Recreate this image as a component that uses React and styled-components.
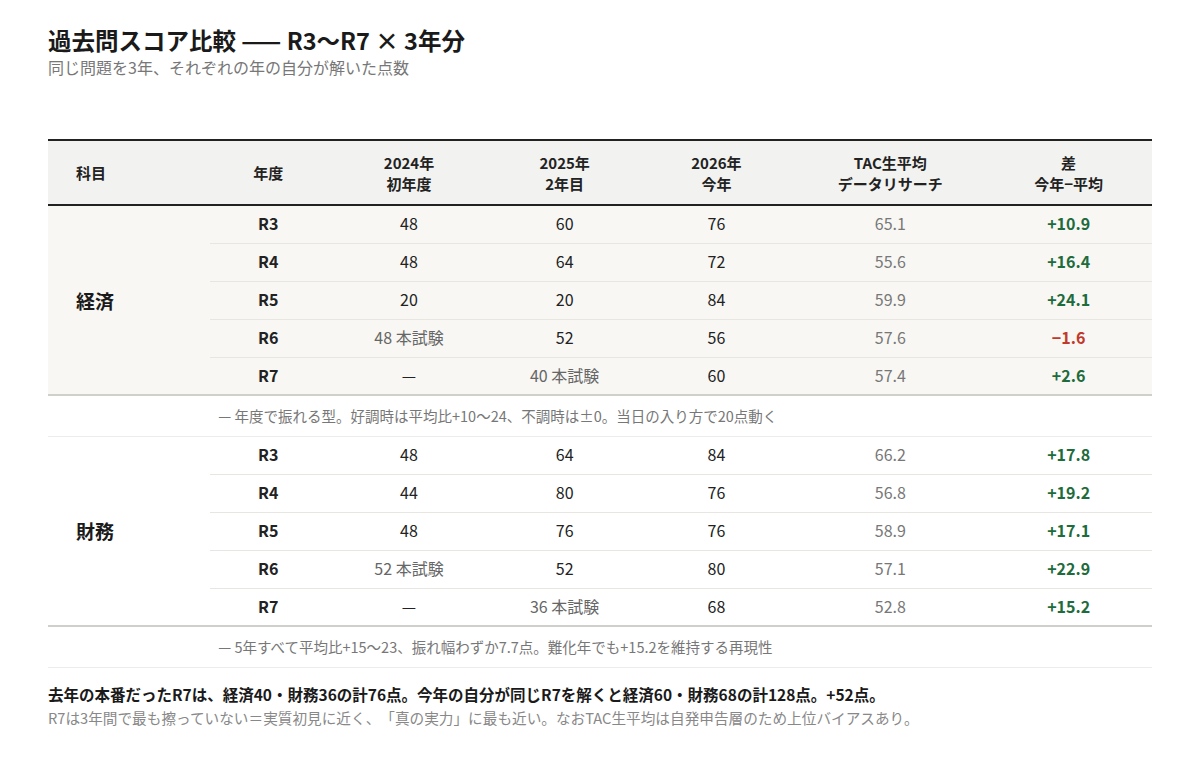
import React from "react";
import styled, { createGlobalStyle } from "styled-components";

const GlobalStyle = createGlobalStyle`
  body {
    margin: 0;
    background: #ffffff;
    font-family: "Noto Sans CJK JP", "Noto Sans", sans-serif;
    color: #1a1a1a;
    text-spacing-trim: space-all;
  }
`;

const Page = styled.div`
  padding: 25px 48px 40px;
  width: 1104px;
`;

const Title = styled.h1`
  margin: 0;
  font-size: 23.5px;
  line-height: 31px;
  font-weight: 700;
`;

const Subtitle = styled.p`
  margin: 0;
  font-size: 16px;
  line-height: 22px;
  color: #777;
`;

const Table = styled.table`
  margin-top: 61px;
  width: 100%;
  border-collapse: collapse;
  table-layout: fixed;
  border-top: 2px solid #222;
`;

const HeadRow = styled.tr`
  background: #f2f2f0;
  border-bottom: 2px solid #222;
`;

const Th = styled.th`
  height: 63px;
  padding: 0 8px;
  font-size: 15px;
  line-height: 21px;
  font-weight: 700;
  color: #222;
  text-align: ${(p) => (p.$left ? "left" : "center")};
  padding-left: ${(p) => (p.$left ? "28px" : "8px")};
`;

const Group = styled.tbody`
  background: ${(p) => (p.$tone ? "#f8f7f4" : "#ffffff")};
`;

const Row = styled.tr`
  height: 38px;
`;

const SubjectCell = styled.td`
  padding-left: 28px;
  font-size: 19px;
  font-weight: 700;
  color: #1a1a1a;
  border-bottom: 2px solid #cfcfcc;
`;

const Cell = styled.td`
  padding: 0 8px 2px;
  text-align: center;
  font-size: 16px;
  color: ${(p) => p.$color || "#222"};
  font-weight: ${(p) => (p.$bold ? 700 : 400)};
  border-bottom: ${(p) => (p.$last ? "2px solid #cfcfcc" : "1px solid #e8e6e1")};
`;

const NoteRow = styled.tr`
  height: 41px;
  background: #ffffff;
  border-bottom: 1px solid #ececea;
`;

const NoteCell = styled.td`
  padding: 0 8px;
  font-size: 14.5px;
  color: #777;
  white-space: nowrap;
`;

const Summary = styled.p`
  margin: 16px 0 0;
  font-size: 15.5px;
  line-height: 21px;
  font-weight: 700;
  color: #1a1a1a;
`;

const SummaryNote = styled.p`
  margin: 2px 0 0;
  font-size: 14.65px;
  line-height: 22px;
  color: #888;
`;

const GREEN = "#1e6b3c";
const RED = "#c0392b";

const groups = [
  {
    subject: "経済",
    tone: true,
    note: "— 年度で振れる型。好調時は平均比+10〜24、不調時は±0。当日の入り方で20点動く",
    rows: [
      ["R3", "48", "60", "76", "65.1", "+10.9"],
      ["R4", "48", "64", "72", "55.6", "+16.4"],
      ["R5", "20", "20", "84", "59.9", "+24.1"],
      ["R6", "48 本試験", "52", "56", "57.6", "−1.6"],
      ["R7", "—", "40 本試験", "60", "57.4", "+2.6"],
    ],
  },
  {
    subject: "財務",
    tone: false,
    note: "— 5年すべて平均比+15〜23、振れ幅わずか7.7点。難化年でも+15.2を維持する再現性",
    rows: [
      ["R3", "48", "64", "84", "66.2", "+17.8"],
      ["R4", "44", "80", "76", "56.8", "+19.2"],
      ["R5", "48", "76", "76", "58.9", "+17.1"],
      ["R6", "52 本試験", "52", "80", "57.1", "+22.9"],
      ["R7", "—", "36 本試験", "68", "52.8", "+15.2"],
    ],
  },
];

const widths = ["14.7%", "10.5%", "15%", "13.2%", "14.3%", "17.2%", "15.1%"];

const scoreColor = (v) => (v.includes("本試験") ? "#666" : "#222");

export default function App() {
  return (
    <>
      <GlobalStyle />
      <Page>
        <Title>過去問スコア比較 —— R3〜R7 × 3年分</Title>
        <Subtitle>同じ問題を3年、それぞれの年の自分が解いた点数</Subtitle>

        <Table>
          <colgroup>
            {widths.map((w, i) => (
              <col key={i} style={{ width: w }} />
            ))}
          </colgroup>
          <thead>
            <HeadRow>
              <Th $left>科目</Th>
              <Th>年度</Th>
              <Th>2024年<br />初年度</Th>
              <Th>2025年<br />2年目</Th>
              <Th>2026年<br />今年</Th>
              <Th>TAC生平均<br />データリサーチ</Th>
              <Th>差<br />今年−平均</Th>
            </HeadRow>
          </thead>
          {groups.map((g) => (
            <React.Fragment key={g.subject}>
              <Group $tone={g.tone}>
                {g.rows.map((r, i) => {
                  const last = i === g.rows.length - 1;
                  return (
                    <Row key={r[0]}>
                      {i === 0 && <SubjectCell rowSpan={5}>{g.subject}</SubjectCell>}
                      <Cell $bold $last={last}>{r[0]}</Cell>
                      <Cell $last={last} $color={scoreColor(r[1])}>{r[1]}</Cell>
                      <Cell $last={last} $color={scoreColor(r[2])}>{r[2]}</Cell>
                      <Cell $last={last}>{r[3]}</Cell>
                      <Cell $last={last} $color="#777">{r[4]}</Cell>
                      <Cell $last={last} $bold $color={r[5].startsWith("+") ? GREEN : RED}>
                        {r[5]}
                      </Cell>
                    </Row>
                  );
                })}
              </Group>
              <tbody>
                <NoteRow>
                  <NoteCell />
                  <NoteCell colSpan={6}>{g.note}</NoteCell>
                </NoteRow>
              </tbody>
            </React.Fragment>
          ))}
        </Table>

        <Summary>
          去年の本番だったR7は、経済40・財務36の計76点。今年の自分が同じR7を解くと経済60・財務68の計128点。+52点。
        </Summary>
        <SummaryNote>
          R7は3年間で最も擦っていない＝実質初見に近く、「真の実力」に最も近い。なおTAC生平均は自発申告層のため上位バイアスあり。
        </SummaryNote>
      </Page>
    </>
  );
}
